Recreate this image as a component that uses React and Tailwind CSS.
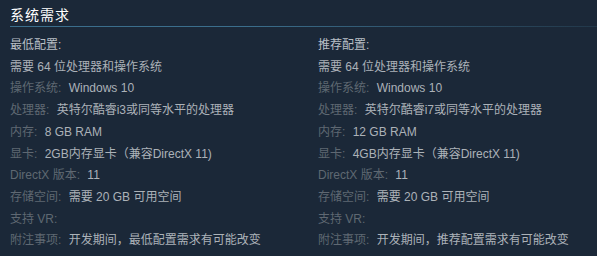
import React from "react";

const minReq = {
  title: "最低配置:",
  cpu: "英特尔酷睿i3或同等水平的处理器",
  ram: "8 GB RAM",
  gpu: "2GB内存显卡（兼容DirectX 11)",
  note: "开发期间，最低配置需求有可能改变",
};

const recReq = {
  title: "推荐配置:",
  cpu: "英特尔酷睿i7或同等水平的处理器",
  ram: "12 GB RAM",
  gpu: "4GB内存显卡（兼容DirectX 11)",
  note: "开发期间，推荐配置需求有可能改变",
};

const Row = ({ label, value }) => (
  <li>
    <span className="text-[#5f6872] pr-[1px]">{label}</span>{" "}
    <span className="text-[#acb2b8] ml-[3px]">{value}</span>
  </li>
);

const ReqColumn = ({ req }) => (
  <ul className="w-[308px] shrink-0 leading-[21.7px]">
    <li className="text-[#b8bfc6]">{req.title}</li>
    <li className="text-[#acb2b8]">需要 64 位处理器和操作系统</li>
    <Row label="操作系统:" value="Windows 10" />
    <Row label="处理器:" value={req.cpu} />
    <Row label="内存:" value={req.ram} />
    <Row label="显卡:" value={req.gpu} />
    <Row label="DirectX 版本:" value="11" />
    <Row label="存储空间:" value="需要 20 GB 可用空间" />
    <Row label="支持 VR:" value="" />
    <Row label="附注事项:" value={req.note} />
  </ul>
);

export default function App() {
  return (
    <div
      className="w-[597px] h-[256px] bg-[#1b2838] pl-[10px] pt-[6px] text-[12px] overflow-hidden"
      style={{ fontFamily: '"Liberation Sans", "Noto Sans CJK SC", sans-serif' }}
    >
      <h2 className="text-[14px] leading-[18px] text-white tracking-[1px]">系统需求</h2>
      <div className="mt-[2px] h-px bg-gradient-to-r from-[#3b6e8c] from-40% to-[#22384a]" />
      <div className="flex mt-[8px]">
        <ReqColumn req={minReq} />
        <ReqColumn req={recReq} />
      </div>
    </div>
  );
}
